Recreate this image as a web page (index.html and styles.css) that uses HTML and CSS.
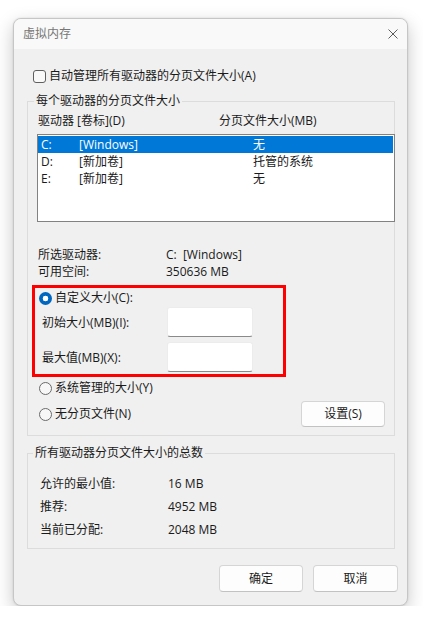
FILE: index.html
```html
<!DOCTYPE html>
<html lang="zh-CN">
<head>
<meta charset="utf-8">
<title>虚拟内存</title>
<link rel="stylesheet" href="styles.css">
</head>
<body>
<div class="window">
  <div class="titlebar">
    <span class="title">虚拟内存</span>
    <svg class="close" width="10" height="10" viewBox="0 0 10 10"><path d="M0.5 0.5L9.5 9.5M9.5 0.5L0.5 9.5" stroke="#5c5c5c" stroke-width="1" fill="none"/></svg>
  </div>
  <div class="content">
    <div class="check-row"><span class="checkbox"></span><span>自动管理所有驱动器的分页文件大小(A)</span></div>

    <fieldset class="group group-drives">
      <legend>每个驱动器的分页文件大小</legend>
      <div class="cols"><span>驱动器 [卷标](D)</span><span>分页文件大小(MB)</span></div>
      <div class="listbox">
        <div class="lrow selected"><span>C:</span><span>[Windows]</span><span>无</span></div>
        <div class="lrow"><span>D:</span><span>[新加卷]</span><span>托管的系统</span></div>
        <div class="lrow"><span>E:</span><span>[新加卷]</span><span>无</span></div>
      </div>
      <div class="info">
        <span>所选驱动器:</span><span>C:&nbsp;&nbsp;[Windows]</span>
        <span>可用空间:</span><span>350636 MB</span>
      </div>
      <div class="highlight">
        <div class="radio-row"><span class="radio checked"></span><span>自定义大小(C):</span></div>
        <div class="field-row"><span>初始大小(MB)(I):</span><span class="input"></span></div>
        <div class="field-row"><span>最大值(MB)(X):</span><span class="input"></span></div>
      </div>
      <div class="radio-row plain"><span class="radio"></span><span>系统管理的大小(Y)</span></div>
      <div class="last-row">
        <div class="radio-row"><span class="radio"></span><span>无分页文件(N)</span></div>
        <button class="btn btn-set">设置(S)</button>
      </div>
    </fieldset>

    <fieldset class="group group-total">
      <legend>所有驱动器分页文件大小的总数</legend>
      <div class="totals">
        <span>允许的最小值:</span><span>16 MB</span>
        <span>推荐:</span><span>4952 MB</span>
        <span>当前已分配:</span><span>2048 MB</span>
      </div>
    </fieldset>

    <div class="actions">
      <button class="btn btn-ok">确定</button>
      <button class="btn btn-cancel">取消</button>
    </div>
  </div>
</div>
</body>
</html>
```

FILE: styles.css
```css
* { box-sizing: border-box; }
html, body {
  margin: 0;
  padding: 0;
  background: #ffffff;
}
body {
  font-family: "Open Sans", "Noto Sans CJK SC", sans-serif;
  font-size: 12px;
  color: #1a1a1a;
  padding: 18px 0 0 13px;
}
.window {
  width: 395px;
  height: 588px;
  background: #f0f0f0;
  border: 1px solid #c6c6c6;
  border-radius: 8px;
  box-shadow: 0 6px 18px rgba(0,0,0,0.22), 0 0 2px rgba(0,0,0,0.12);
  overflow: hidden;
  display: flex;
  flex-direction: column;
}
.titlebar {
  height: 30px;
  flex: none;
  background: #f9f9f9;
  display: flex;
  align-items: center;
  justify-content: space-between;
  padding: 0 9px 0 9px;
}
.title {
  color: #767676;
  font-size: 12px;
  line-height: 16px;
}
.close { display: block; }

.content {
  display: flex;
  flex-direction: column;
}
.check-row {
  display: flex;
  align-items: center;
  height: 16px;
  line-height: 16px;
  margin: 19px 0 0 19px;
}
.checkbox {
  width: 13px;
  height: 13px;
  border: 1px solid #5f5f5f;
  border-radius: 3px;
  background: #f9f9f9;
  margin-right: 3px;
  flex: none;
}

.group {
  margin: 9px 12px 0 13px;
  padding: 0;
  border: 1px solid #dcdcdc;
  min-width: 0;
}
.group legend {
  padding: 0 2px;
  margin-left: 6px;
  line-height: 16px;
  font-size: 12px;
}
.group-total legend { margin-left: 5px; }

.cols {
  display: grid;
  grid-template-columns: 181px 1fr;
  line-height: 16px;
  margin: 4px 0 0 10px;
}
.listbox {
  margin: 5px -1px 0 9px;
  height: 88px;
  background: #ffffff;
  border: 1px solid #828282;
  padding: 1px 1px 0 0;
}
.lrow {
  display: grid;
  grid-template-columns: 38px 174px 1fr;
  height: 17px;
  line-height: 17px;
  padding-left: 3px;
}
.lrow.selected {
  background: #0078d7;
  color: #ffffff;
}
.info {
  display: grid;
  grid-template-columns: 128px 1fr;
  grid-auto-rows: 17px;
  line-height: 17px;
  margin: 24px 0 0 10px;
}

.highlight {
  margin: 5px 0 0 4px;
  width: 254px;
  height: 92px;
  border: 3px solid #ff0000;
  padding: 2px 0 2px 4px;
  display: flex;
  flex-direction: column;
  gap: 1px;
}
.radio-row {
  display: flex;
  align-items: center;
  line-height: 16px;
  height: 16px;
}
.radio {
  width: 13px;
  height: 13px;
  border-radius: 50%;
  border: 1px solid #6a6a6a;
  background: #f7f7f7;
  margin-right: 3px;
  flex: none;
}
.radio.checked {
  border: none;
  background: radial-gradient(circle, #ffffff 0 2.6px, #0067c0 3.1px);
}
.field-row {
  display: grid;
  grid-template-columns: 125px 86px;
  align-items: center;
  height: 30px;
  padding-left: 3px;
}
.field-row + .field-row { margin-top: 4px; }
.input {
  height: 30px;
  background: #ffffff;
  border: 1px solid #ececec;
  border-bottom: 1px solid #8a8a8a;
  border-radius: 3px;
}
.radio-row.plain {
  margin: 3px 0 0 11px;
}
.last-row {
  display: flex;
  align-items: center;
  justify-content: space-between;
  height: 26px;
  margin: 5px 9px 8px 11px;
}

.btn {
  font: inherit;
  color: #1a1a1a;
  background: #fdfdfd;
  border: 1px solid #d5d5d5;
  border-bottom-color: #c2c2c2;
  border-radius: 4px;
  padding: 0;
  line-height: 16px;
}
.btn-set {
  width: 84px;
  height: 26px;
}

.totals {
  display: grid;
  grid-template-columns: 128px 1fr;
  grid-auto-rows: 23px;
  line-height: 23px;
  margin: 11px 0 7px 12px;
}

.actions {
  display: flex;
  justify-content: flex-end;
  gap: 10px;
  margin: 16px 9px 0 0;
}
.btn-ok, .btn-cancel {
  width: 84px;
  height: 27px;
}
.btn-cancel { width: 85px; }
```
